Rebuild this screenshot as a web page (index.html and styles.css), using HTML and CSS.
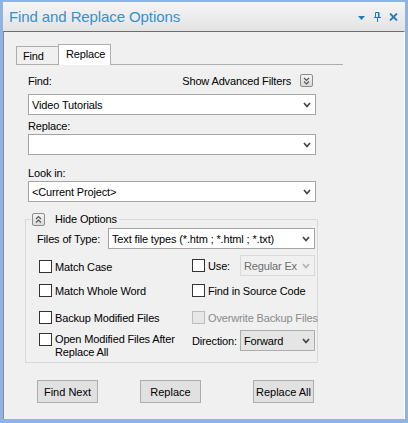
FILE: index.html
```html
<!DOCTYPE html>
<html>
<head>
<meta charset="utf-8">
<link rel="stylesheet" href="styles.css">
</head>
<body>
<div class="frame">
  <div class="titlebar">
    <span class="title">Find and Replace Options</span>
    <div class="tb-icons">
      <svg class="ic-tri" width="7" height="12" viewBox="0 0 7 12"><path d="M0 5h7l-3.5 4z" fill="#1f7cc0"/></svg>
      <svg class="ic-pin" width="7" height="10" viewBox="0 0 7 10"><path d="M1.5 0.5h3.5v5h-3.5z" fill="none" stroke="#1f7cc0"/><path d="M4.5 0.5v5" stroke="#1f7cc0" stroke-width="1.2"/><path d="M0 5.5h7M3.5 6v4" stroke="#1f7cc0"/></svg>
      <svg class="ic-x" width="9" height="8" viewBox="0 0 9 8"><path d="M1 0.5l7 7M8 0.5l-7 7" stroke="#1f7cc0" stroke-width="1.8"/></svg>
    </div>
  </div>
  <div class="panel">
    <div class="tabstrip">
      <div class="tab">Find</div>
      <div class="tab active">Replace</div>
    </div>
    <div class="form">
      <div class="row1">
        <span>Find:</span>
        <div class="adv">
          <span>Show Advanced Filters</span>
          <span class="sqbtn"><svg width="7" height="8" viewBox="0 0 7 8"><path d="M1 1l2.5 2.5L6 1M1 4.5L3.5 7 6 4.5" fill="none" stroke="#555" stroke-width="1.1"/></svg></span>
        </div>
      </div>
      <div class="combo combo-first"><span class="val">Video Tutorials</span><svg class="arr" width="8" height="6" viewBox="0 0 8 6"><path d="M1 1l3 3.5L7 1" fill="none" stroke="#444" stroke-width="1.7"/></svg></div>
      <div class="lbl lbl-s">Replace:</div>
      <div class="combo"><span class="val"></span><svg class="arr" width="8" height="6" viewBox="0 0 8 6"><path d="M1 1l3 3.5L7 1" fill="none" stroke="#444" stroke-width="1.7"/></svg></div>
      <div class="lbl lbl-l">Look in:</div>
      <div class="combo"><span class="val">&lt;Current Project&gt;</span><svg class="arr" width="8" height="6" viewBox="0 0 8 6"><path d="M1 1l3 3.5L7 1" fill="none" stroke="#444" stroke-width="1.7"/></svg></div>
    </div>
    <div class="group">
      <div class="legend">
        <span class="sqbtn"><svg width="7" height="8" viewBox="0 0 7 8"><path d="M1 4l2.5-2.5L6 4M1 7.5L3.5 5 6 7.5" fill="none" stroke="#555" stroke-width="1.1"/></svg></span>
        <span>Hide Options</span>
      </div>
      <div class="types-row">
        <span class="types-lbl">Files of Type:</span>
        <div class="combo combo-types"><span class="val">Text file types (*.htm ; *.html ; *.txt)</span><svg class="arr" width="8" height="6" viewBox="0 0 8 6"><path d="M1 1l3 3.5L7 1" fill="none" stroke="#444" stroke-width="1.7"/></svg></div>
      </div>
      <div class="optrow row-a">
        <label class="chk"><span class="box"></span><span>Match Case</span></label>
        <div class="cell2">
          <label class="chk"><span class="box"></span><span>Use:</span></label>
          <div class="combo combo-small disabled"><span class="val clip">Regular Ex</span><svg class="arr" width="8" height="6" viewBox="0 0 8 6"><path d="M1 1l3 3.5L7 1" fill="none" stroke="#b4b4b4" stroke-width="1.7"/></svg></div>
        </div>
      </div>
      <div class="optrow row-b">
        <label class="chk"><span class="box"></span><span>Match Whole Word</span></label>
        <label class="chk"><span class="box"></span><span>Find in Source Code</span></label>
      </div>
      <div class="optrow row-c">
        <label class="chk"><span class="box"></span><span>Backup Modified Files</span></label>
        <label class="chk dis"><span class="box"></span><span>Overwrite Backup Files</span></label>
      </div>
      <div class="optrow row-d">
        <label class="chk chk-top"><span class="box"></span><span class="two">Open Modified Files After<br>Replace All</span></label>
        <div class="cell2">
          <span class="dir-lbl">Direction:</span>
          <div class="combo combo-small grey"><span class="val">Forward</span><svg class="arr" width="8" height="6" viewBox="0 0 8 6"><path d="M1 1l3 3.5L7 1" fill="none" stroke="#444" stroke-width="1.7"/></svg></div>
        </div>
      </div>
    </div>
    <div class="buttons">
      <button class="btn">Find Next</button>
      <button class="btn btn-mid">Replace</button>
      <button class="btn">Replace All</button>
    </div>
  </div>
</div>
</body>
</html>
```
FILE: styles.css
```css
html, body {
  margin: 0;
  padding: 0;
}
body {
  width: 408px;
  height: 423px;
  overflow: hidden;
  background: #8db4e2;
  font: 11px "Liberation Sans", Arial, sans-serif;
  letter-spacing: -0.15px;
  color: #000;
}
.frame {
  margin: 2px 3px 0 3px;
  height: 417px;
  display: flex;
  flex-direction: column;
  background: #f0f0f0;
}
.titlebar {
  height: 29px;
  flex: none;
  display: flex;
  align-items: center;
  padding-left: 6px;
  background: linear-gradient(#f5f5f5, #e3e3e3);
}
.title {
  flex: 1;
  font-size: 15px;
  color: #3691cf;
  letter-spacing: -0.1px;
}
.tb-icons {
  display: flex;
  align-items: center;
  padding-right: 7px;
}
.ic-tri { margin-right: 9px; }
.ic-pin { margin-right: 8px; margin-top: 1px; }
.ic-x { margin-top: 1px; }
.panel {
  flex: 1;
  border-top: 1px solid #6d6d6d;
  border-left: 1px solid #8a8a8a;
  border-right: 1px solid #fff;
}
.tabstrip {
  margin: 12px 0 0 12px;
  width: 327px;
  height: 20px;
  border-bottom: 1px solid #adadad;
  display: flex;
  align-items: flex-end;
}
.tab {
  box-sizing: border-box;
  height: 18px;
  width: 42px;
  padding: 0 0 0 6px;
  border: 1px solid #adadad;
  border-bottom: 0;
  border-right: 0;
  display: flex;
  align-items: center;
  background: #f0f0f0;
}
.tab.active {
  height: 21px;
  width: 53px;
  padding: 0 0 2px 7px;
  border-right: 1px solid #adadad;
  background: #fff;
  margin-bottom: -1px;
}
.form {
  margin-left: 24px;
  width: 288px;
}
.row1 {
  margin-top: 7px;
  height: 17px;
  display: flex;
  justify-content: space-between;
  align-items: center;
}
.adv {
  display: flex;
  align-items: center;
  gap: 9px;
  padding-right: 3px;
}
.sqbtn {
  box-sizing: border-box;
  width: 13px;
  height: 13px;
  border: 1px solid #8c8c8c;
  border-radius: 2px;
  background: linear-gradient(#f4f4f4, #dadada);
  display: flex;
  align-items: center;
  justify-content: center;
}
.combo {
  box-sizing: border-box;
  height: 21px;
  border: 1px solid #a5a5a5;
  background: #fff;
  display: flex;
  align-items: center;
  padding: 0 4px 0 3px;
}
.combo .val {
  flex: 1;
  white-space: nowrap;
  overflow: hidden;
}
.combo .arr { flex: none; }
.combo-first { margin-top: 5px; }
.lbl {
  height: 14px;
  line-height: 14px;
  margin-bottom: 1px;
}
.lbl-s { margin-top: 4px; }
.lbl-l { margin-top: 11px; }
.group {
  box-sizing: border-box;
  margin: 17px 0 0 21px;
  width: 293px;
  border: 1px solid #d9d9d9;
  padding: 0 0 3px 0;
}
.legend {
  margin: -8px 0 0 5px;
  height: 14px;
  width: fit-content;
  display: flex;
  align-items: center;
  gap: 10px;
  padding: 0 2px 0 1px;
  background: #f0f0f0;
}
.types-row {
  margin-top: 2px;
  display: flex;
  align-items: center;
  padding-left: 11px;
}
.types-lbl { width: 71px; }
.combo-types { width: 207px; }
.optrow {
  display: grid;
  grid-template-columns: 153px 123px;
  padding-left: 13px;
  align-items: center;
}
.row-a { margin-top: 6px; height: 21px; align-items: start; }
.row-a > .chk { margin-top: 5px; }
.row-a .cell2 > .chk { margin-top: 0; }
.row-b { margin-top: 5px; height: 19px; }
.row-c { margin-top: 8px; height: 19px; }
.row-d { margin-top: 3px; height: 29px; align-items: start; }
.cell2 {
  display: flex;
  justify-content: space-between;
  align-items: center;
}
.chk {
  display: flex;
  align-items: center;
  gap: 3px;
  white-space: nowrap;
}
.box {
  box-sizing: border-box;
  width: 13px;
  height: 13px;
  flex: none;
  border: 1px solid #333;
  background: #fff;
}
.chk.dis { color: #8a8a8a; }
.chk.dis .box {
  border-color: #bcbcbc;
  background: #e6e6e6;
}
.chk-top {
  align-items: flex-start;
  margin-top: 3px;
}
.two { line-height: 13px; }
.combo-small { width: 75px; }
.combo.disabled {
  background: #f0f0f0;
  border-color: #d9d9d9;
  color: #6d6d6d;
}
.combo .val.clip {
  flex: none;
  width: 53px;
}
.combo.disabled .arr, .combo.grey .arr { margin-left: auto; }
.combo.grey {
  background: #e5e5e5;
  border-color: #acacac;
}
.dir-lbl {
  line-height: 13px;
  margin-top: 5px;
  align-self: flex-start;
}
.row-d .cell2 { align-items: flex-start; }
.buttons {
  margin-top: 17px;
  padding-left: 33px;
  display: flex;
}
.btn {
  box-sizing: border-box;
  width: 61px;
  height: 23px;
  margin: 0;
  padding: 0;
  border: 1px solid #adadad;
  background: #e1e1e1;
  font: inherit;
  color: #000;
}
.btn-mid { margin: 0 52px 0 42px; }
```
